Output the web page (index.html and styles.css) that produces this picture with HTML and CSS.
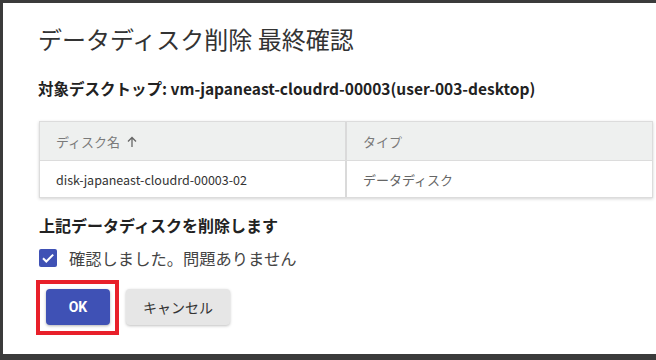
FILE: index.html
```html
<!DOCTYPE html>
<html>
<head>
	<title>データディスク削除 最終確認</title>
	<meta name="viewport" content="width=device-width">
	<link rel="stylesheet" href="styles.css">
</head>
<body>
	<div class="dialog">
		<h1 class="dialogTitle">データディスク削除 最終確認</h1>
		<p class="targetLabel">対象デスクトップ: vm-japaneast-cloudrd-00003(user-003-desktop)</p>

		<div class="diskTable">
			<div class="diskRow diskHead">
				<div class="diskCell">ディスク名
					<svg class="sortIcon" width="12" height="12" viewBox="0 0 12 12"><path d="M6 11V2M2 5.5L6 1.5l4 4" fill="none" stroke="#666" stroke-width="1.3"/></svg>
				</div>
				<div class="diskCell">タイプ</div>
			</div>
			<div class="diskRow">
				<div class="diskCell diskName">disk-japaneast-cloudrd-00003-02</div>
				<div class="diskCell diskType">データディスク</div>
			</div>
		</div>

		<p class="deleteLabel">上記データディスクを削除します</p>

		<label class="confirmRow">
			<svg class="checkBox" width="18" height="18" viewBox="0 0 18 18"><rect x="0" y="0" width="18" height="18" rx="2" fill="#3f51b5"/><path d="M4 9.2l3.3 3.3L14.2 5.6" fill="none" stroke="#fff" stroke-width="2"/></svg>
			<span>確認しました。問題ありません</span>
		</label>

		<div class="buttonRow">
			<div class="highlightBox">
				<button class="okButton">OK</button>
			</div>
			<button class="cancelButton">キャンセル</button>
		</div>
	</div>
</body>
</html>
```

FILE: styles.css
```css
/* page */
body {
	background-color: #3b3b3b;
	margin: 0;
	padding: 0;
	height: 360px;
	overflow: hidden;
	font-family: "Noto Sans CJK JP", "Noto Sans", sans-serif;
	color: #333;
}

/* dialog */
.dialog {
	background-color: #fff;
	margin: 3px 0 0 3px;
	height: 351px;
	padding: 20px 3px 0 35px;
	box-sizing: border-box;
	display: flex;
	flex-direction: column;
}

.dialogTitle {
	margin: 0;
	font-size: 24px;
	font-weight: 400;
	line-height: 32px;
	color: #333;
}

.targetLabel {
	margin: 23px 0 0 0;
	font-size: 15.5px;
	font-weight: 700;
	line-height: 20px;
	color: #222;
}

/* table */
.diskTable {
	margin: 23px 0 0 1px;
	border: 1px solid #dcdcdc;
	box-shadow: 0 1px 3px rgba(0, 0, 0, 0.18);
}

.diskRow {
	display: grid;
	grid-template-columns: 305px 1fr;
	height: 36px;
}

.diskHead {
	background-color: #eef0ef;
	height: 38px;
	border-bottom: 1px solid #dcdcdc;
	color: #7a7a7a;
}

.diskCell {
	display: flex;
	align-items: center;
	gap: 6px;
	padding-left: 16px;
	font-size: 12.5px;
}

.diskCell + .diskCell {
	border-left: 2px solid #dadada;
}

.diskHead .diskCell {
	font-size: 13px;
}

.sortIcon {
	margin-top: 1px;
}

.diskName {
	color: #333;
}

.diskType {
	color: #666;
	font-size: 13px;
}

/* confirm */
.deleteLabel {
	margin: 17px 0 0 1px;
	font-size: 16px;
	font-weight: 700;
	line-height: 20px;
	color: #222;
}

.confirmRow {
	margin: 13px 0 0 1px;
	display: flex;
	align-items: center;
	gap: 12px;
	font-size: 16.3px;
	line-height: 20px;
	color: #444;
}

/* buttons */
.buttonRow {
	margin-top: 12px;
	display: flex;
	align-items: flex-start;
	gap: 7px;
}

.highlightBox {
	margin-left: -2px;
	border: 4px solid #e8202a;
	padding: 5px 5px 6px 6px;
	display: flex;
}

.okButton {
	background-color: #3f51b5;
	color: #fff;
	border: none;
	border-radius: 4px;
	width: 64px;
	height: 36px;
	font-family: Roboto, "Noto Sans", sans-serif;
	font-size: 14px;
	font-weight: 700;
	box-shadow: 0 1px 3px rgba(0, 0, 0, 0.3);
}

.cancelButton {
	margin-top: 9px;
	background-color: #e6e6e6;
	color: #333;
	border: none;
	border-radius: 4px;
	width: 104px;
	height: 36px;
	font-family: "Noto Sans CJK JP", sans-serif;
	font-size: 14px;
	box-shadow: 0 1px 3px rgba(0, 0, 0, 0.25);
}
```
